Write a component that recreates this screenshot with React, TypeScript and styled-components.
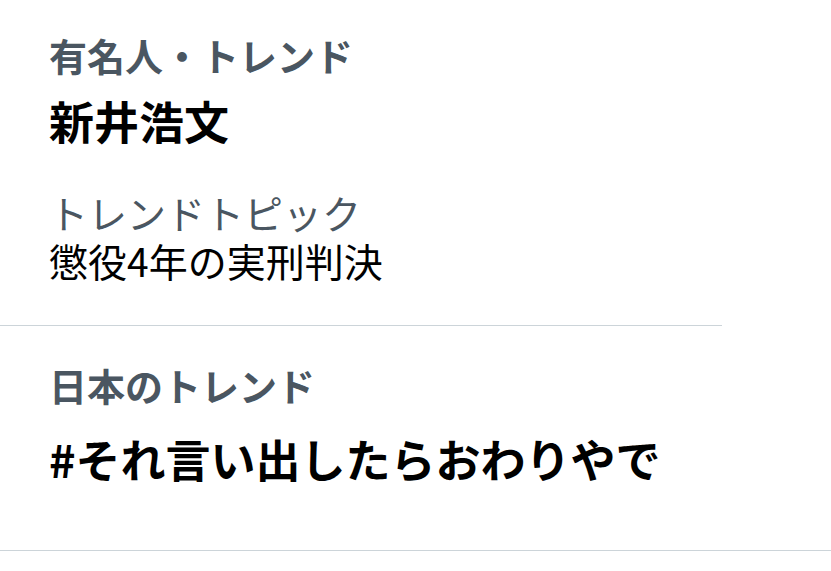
import React from 'react';
import styled, { createGlobalStyle } from 'styled-components';

const GlobalStyle = createGlobalStyle`
  html, body {
    margin: 0;
    padding: 0;
    background: #ffffff;
  }
  body {
    font-family: "Noto Sans CJK JP", "Noto Sans", sans-serif;
  }
`;

interface Trend {
  id: number;
  category: string;
  name: string;
  topicLabel?: string;
  topic?: string;
  inset?: boolean;
}

const trends: Trend[] = [
  {
    id: 1,
    category: '有名人・トレンド',
    name: '新井浩文',
    topicLabel: 'トレンドトピック',
    topic: '懲役4年の実刑判決',
    inset: true,
  },
  {
    id: 2,
    category: '日本のトレンド',
    name: '#それ言い出したらおわりやで',
  },
];

const App: React.FC = () => {
  return (
    <>
      <GlobalStyle />
      <TrendList>
        {trends.map((trend) => (
          <TrendItem key={trend.id} $inset={trend.inset} $hasTopic={!!trend.topic}>
            <Category>{trend.category}</Category>
            <TrendName $hasTopic={!!trend.topic}>{trend.name}</TrendName>
            {trend.topic && (
              <>
                <TopicLabel>{trend.topicLabel}</TopicLabel>
                <TopicText>{trend.topic}</TopicText>
              </>
            )}
          </TrendItem>
        ))}
      </TrendList>
    </>
  );
};

export default App;

const TrendList = styled.div`
  display: flex;
  flex-direction: column;
  width: 831px;
`;

const TrendItem = styled.div<{ $inset?: boolean; $hasTopic?: boolean }>`
  display: flex;
  flex-direction: column;
  padding: ${(p) => (p.$hasTopic ? '32px 0 41px 49px' : '36px 0 64px 49px')};
  margin-right: ${(p) => (p.$inset ? '109px' : '0')};
  border-bottom: 1px solid #ccd4d9;
`;

const Category = styled.div`
  font-size: 38px;
  line-height: 1.2;
  font-weight: 700;
  color: #4a5661;
`;

const TrendName = styled.div<{ $hasTopic?: boolean }>`
  margin-top: ${(p) => (p.$hasTopic ? '16px' : '24px')};
  font-size: 45px;
  line-height: 1.2;
  font-weight: 700;
  color: #000000;
`;

const TopicLabel = styled.div`
  margin-top: 41px;
  font-size: 39px;
  line-height: 1.2;
  font-weight: 400;
  color: #4a5661;
`;

const TopicText = styled.div`
  margin-top: 2px;
  font-size: 39px;
  line-height: 1.2;
  font-weight: 400;
  color: #000000;
`;
